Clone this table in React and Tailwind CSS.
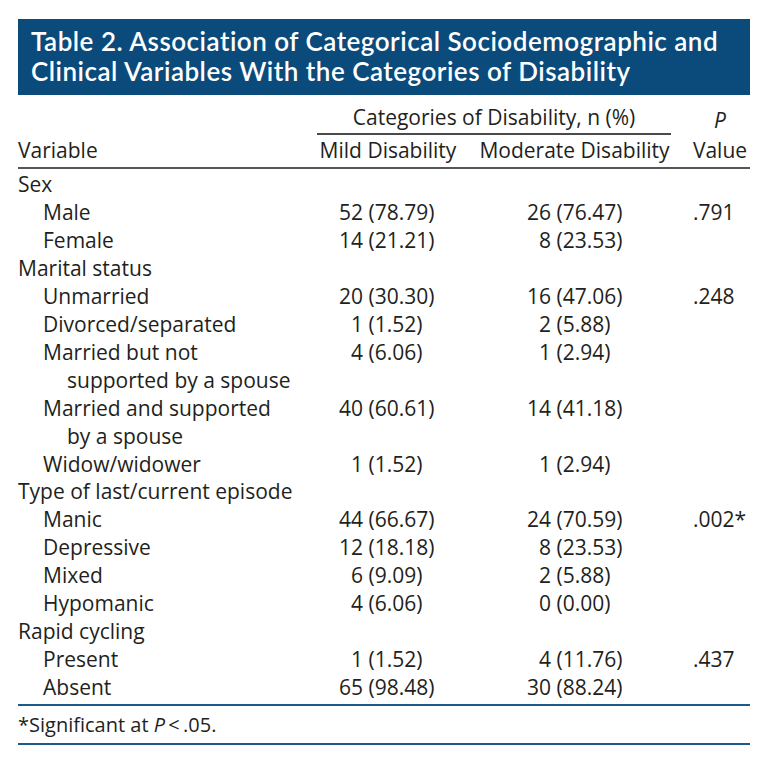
import React from 'react';

const rows = [
  { label: ['Sex'], level: 0 },
  { label: ['Male'], level: 1, mild: '52 (78.79)', mod: '26 (76.47)', p: '.791' },
  { label: ['Female'], level: 1, mild: '14 (21.21)', mod: '8 (23.53)' },
  { label: ['Marital status'], level: 0 },
  { label: ['Unmarried'], level: 1, mild: '20 (30.30)', mod: '16 (47.06)', p: '.248' },
  { label: ['Divorced/separated'], level: 1, mild: '1 (1.52)', mod: '2 (5.88)' },
  { label: ['Married but not', 'supported by a spouse'], level: 1, mild: '4 (6.06)', mod: '1 (2.94)' },
  { label: ['Married and supported', 'by a spouse'], level: 1, mild: '40 (60.61)', mod: '14 (41.18)' },
  { label: ['Widow/widower'], level: 1, mild: '1 (1.52)', mod: '1 (2.94)' },
  { label: ['Type of last/current episode'], level: 0 },
  { label: ['Manic'], level: 1, mild: '44 (66.67)', mod: '24 (70.59)', p: '.002*' },
  { label: ['Depressive'], level: 1, mild: '12 (18.18)', mod: '8 (23.53)' },
  { label: ['Mixed'], level: 1, mild: '6 (9.09)', mod: '2 (5.88)' },
  { label: ['Hypomanic'], level: 1, mild: '4 (6.06)', mod: '0 (0.00)' },
  { label: ['Rapid cycling'], level: 0 },
  { label: ['Present'], level: 1, mild: '1 (1.52)', mod: '4 (11.76)', p: '.437' },
  { label: ['Absent'], level: 1, mild: '65 (98.48)', mod: '30 (88.24)' },
];

// count right-aligned in a two-digit box, percentage left-aligned after it
const Num = ({ value }) => {
  if (!value) return null;
  const [count, pct] = value.split(' ');
  return (
    <span className="whitespace-nowrap">
      <span className="inline-block w-[2ch] text-right">{count}</span> {pct}
    </span>
  );
};

const App = () => {
  return (
    <div
      className="w-[768px] h-[760px] bg-white text-[#231f20] pt-[19px] px-[18px]"
      style={{ fontFamily: '"Open Sans", "Noto Sans", sans-serif' }}
    >
      {/* Title bar */}
      <div
        className="bg-[#0a4b7c] h-[76px] pl-[13px] pt-[7px] text-white text-[26px] font-semibold leading-[30px] tracking-[0.5px]"
        style={{ fontFamily: 'Lato, "Open Sans", sans-serif' }}
      >
        <div>Table 2. Association of Categorical Sociodemographic and</div>
        <div>Clinical Variables With the Categories of Disability</div>
      </div>

      {/* Column headers */}
      <div className="text-[21px] leading-[28px] tabular-nums">
        <div className="flex mt-[8px]">
          <div className="w-[299px]" />
          <div className="w-[354px] text-center border-b-2 border-[#4a4a4a] pb-[2px]">
            Categories of Disability, n (%)
          </div>
          <div className="ml-[19px] w-[60px] text-center italic pt-[3px]">P</div>
        </div>
        <div className="flex border-b-2 border-[#555] pt-[1px] pb-[3px]">
          <div className="w-[299px]">Variable</div>
          <div className="w-[142px] text-center whitespace-nowrap">Mild Disability</div>
          <div className="ml-[19px] w-[193px] text-center whitespace-nowrap">Moderate Disability</div>
          <div className="ml-[19px] w-[60px] text-center">Value</div>
        </div>

        {/* Body */}
        <div className="pt-[2px] pb-[2px] border-b-2 border-[#1d5a8c] leading-[27.95px]">
          {rows.map((row, i) => (
            <div key={i} className="flex">
              <div className={row.level ? 'w-[299px] pl-[25px]' : 'w-[299px]'}>
                {row.label.map((line, j) => (
                  <div key={j} className={j > 0 ? 'pl-[24px]' : ''}>{line}</div>
                ))}
              </div>
              <div className="w-[142px] pl-[22px]">
                <Num value={row.mild} />
              </div>
              <div className="ml-[19px] w-[193px] pl-[49px]">
                <Num value={row.mod} />
              </div>
              <div className="ml-[19px] w-[60px] pl-[3px]">{row.p}</div>
            </div>
          ))}
        </div>

        {/* Footnote */}
        <div className="pt-[7px] pb-[6px] border-b-2 border-[#1d5a8c] leading-[24px] text-[20px]">
          *Significant at <span className="italic">P</span>&thinsp;&lt;&thinsp;.05.
        </div>
      </div>
    </div>
  );
};

export default App;
